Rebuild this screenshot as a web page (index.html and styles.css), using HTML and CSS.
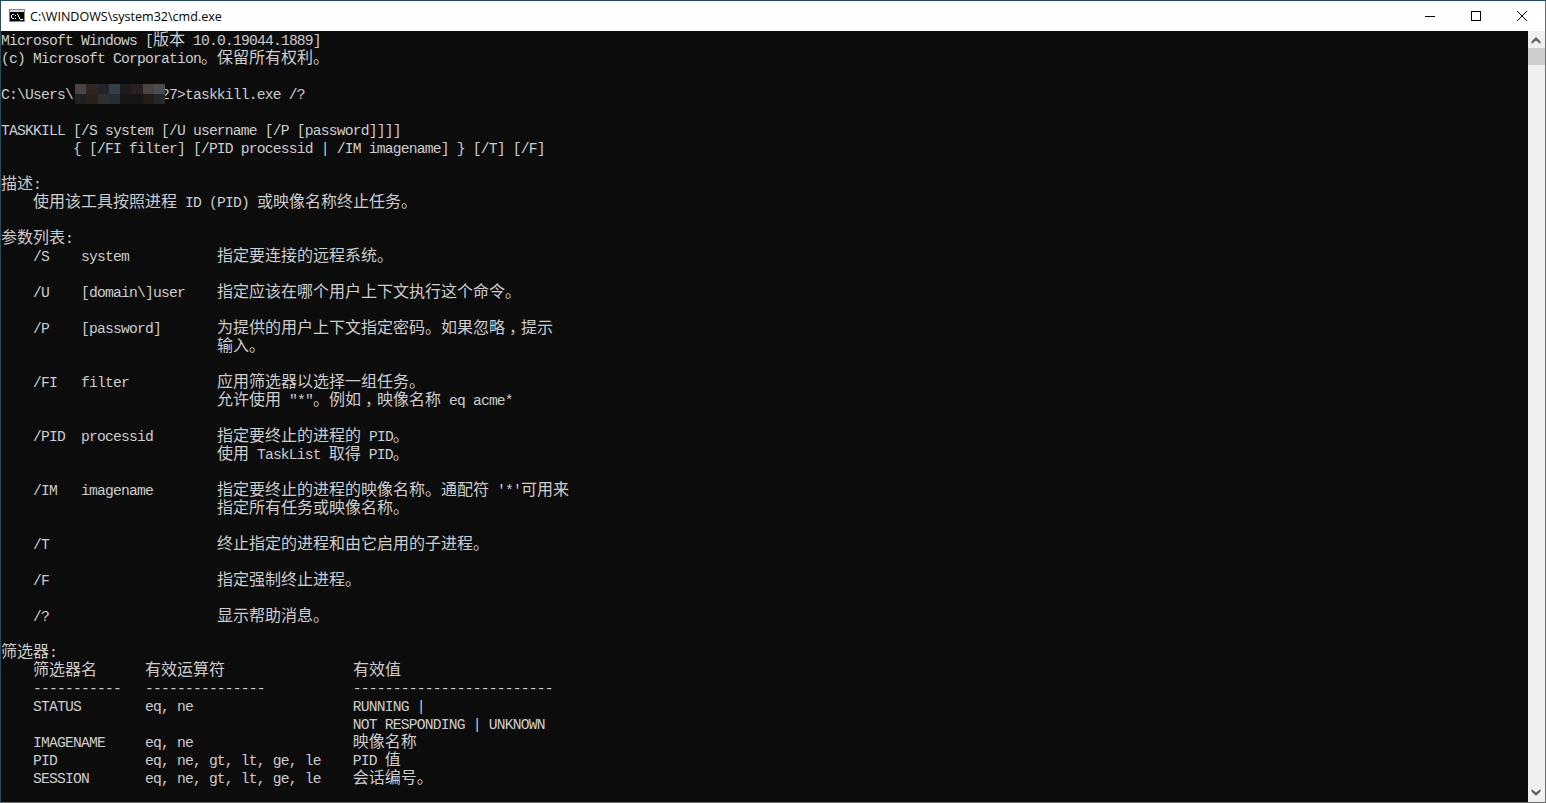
FILE: index.html
```html
<!DOCTYPE html>
<html lang="zh-CN">
<head>
<meta charset="utf-8">
<title>C:\WINDOWS\system32\cmd.exe</title>
<link rel="stylesheet" href="styles.css">
</head>
<body>
<div class="window">
  <header class="titlebar">
    <svg class="app-icon" width="16" height="16" viewBox="0 0 16 16" aria-hidden="true">
      <rect x="0" y="1" width="16" height="13" fill="#8a8a8a"/>
      <rect x="1" y="2" width="14" height="2" fill="#d8d8d8"/>
      <rect x="1" y="4" width="14" height="9" fill="#000"/>
      <path d="M3 6h2v1H3zM2 7h1v3H2zM3 10h2v1H3zM6 7h1v1H6zM6 10h1v1H6zM8 6h1v1H8zM9 7h1v2H9zM10 9h1v2H10zM11 11h3v1h-3z" fill="#fff"/>
    </svg>
    <span class="title">C:\WINDOWS\system32\cmd.exe</span>
    <div class="controls">
      <span class="control"><svg width="10" height="10" viewBox="0 0 10 10"><path d="M0 5.5h10" stroke="#000" fill="none"/></svg></span>
      <span class="control"><svg width="10" height="10" viewBox="0 0 10 10"><rect x=".5" y=".5" width="9" height="9" stroke="#000" fill="none"/></svg></span>
      <span class="control"><svg width="10" height="10" viewBox="0 0 10 10"><path d="M0 0l10 10M10 0L0 10" stroke="#000" stroke-width="1" fill="none"/></svg></span>
    </div>
  </header>
  <div class="body">
    <div class="console">
<span class="line">Microsoft Windows [<i>版本</i> 10.0.19044.1889]</span>
<span class="line">(c) Microsoft Corporation<i>。保留所有权利。</i></span>
<span class="line"> </span>
<span class="line">C:\Users\           27>taskkill.exe /?<span class="mosaic"><b class="m1"></b><b class="m2"></b><b class="m3"></b><b class="m4"></b><b class="m5"></b><b class="m6"></b><b class="m7"></b><b class="m8"></b><b class="m9"></b><b class="m10"></b><b class="m11"></b><b class="m12"></b><b class="m13"></b><b class="m14"></b><b class="m15"></b><b class="m16"></b></span></span>
<span class="line"> </span>
<span class="line">TASKKILL [/S system [/U username [/P [password]]]]</span>
<span class="line">         { [/FI filter] [/PID processid | /IM imagename] } [/T] [/F]</span>
<span class="line"> </span>
<span class="line"><i>描述</i>:</span>
<span class="line">    <i>使用该工具按照进程</i> ID (PID) <i>或映像名称终止任务。</i></span>
<span class="line"> </span>
<span class="line"><i>参数列表</i>:</span>
<span class="line">    /S    system           <i>指定要连接的远程系统。</i></span>
<span class="line"> </span>
<span class="line">    /U    [domain\]user    <i>指定应该在哪个用户上下文执行这个命令。</i></span>
<span class="line"> </span>
<span class="line">    /P    [password]       <i>为提供的用户上下文指定密码。如果忽略<u>，</u>提示</i></span>
<span class="line">                           <i>输入。</i></span>
<span class="line"> </span>
<span class="line">    /FI   filter           <i>应用筛选器以选择一组任务。</i></span>
<span class="line">                           <i>允许使用</i> "*"<i>。例如<u>，</u>映像名称</i> eq acme*</span>
<span class="line"> </span>
<span class="line">    /PID  processid        <i>指定要终止的进程的</i> PID<i>。</i></span>
<span class="line">                           <i>使用</i> TaskList <i>取得</i> PID<i>。</i></span>
<span class="line"> </span>
<span class="line">    /IM   imagename        <i>指定要终止的进程的映像名称。通配符</i> '*'<i>可用来</i></span>
<span class="line">                           <i>指定所有任务或映像名称。</i></span>
<span class="line"> </span>
<span class="line">    /T                     <i>终止指定的进程和由它启用的子进程。</i></span>
<span class="line"> </span>
<span class="line">    /F                     <i>指定强制终止进程。</i></span>
<span class="line"> </span>
<span class="line">    /?                     <i>显示帮助消息。</i></span>
<span class="line"> </span>
<span class="line"><i>筛选器</i>:</span>
<span class="line">    <i>筛选器名</i>      <i>有效运算符</i>                <i>有效值</i></span>
<span class="line">    -----------   ---------------           -------------------------</span>
<span class="line">    STATUS        eq, ne                    RUNNING |</span>
<span class="line">                                            NOT RESPONDING | UNKNOWN</span>
<span class="line">    IMAGENAME     eq, ne                    <i>映像名称</i></span>
<span class="line">    PID           eq, ne, gt, lt, ge, le    PID <i>值</i></span>
<span class="line">    SESSION       eq, ne, gt, lt, ge, le    <i>会话编号。</i></span>
    </div>
    <div class="scrollbar">
      <svg class="arrow" width="17" height="17" viewBox="0 0 17 17"><path d="M3.5 10.5l4-4h1l4 4v2.5L8 9.5 3.5 13z" fill="#606060"/></svg>
      <div class="thumb"></div>
      <div class="track"></div>
      <svg class="arrow" width="17" height="17" viewBox="0 0 17 17"><path d="M3.5 4l4.5 3.5L12.5 4v2.5l-4 4h-1l-4-4z" fill="#606060"/></svg>
    </div>
  </div>
</div>
</body>
</html>
```
FILE: styles.css
```css
* { box-sizing: border-box; }
html, body { margin: 0; height: 100%; overflow: hidden; background: #fff; }
.window {
  width: 1546px;
  height: 803px;
  display: flex;
  flex-direction: column;
  border: 1px solid #6f6f6f;
  border-top-color: #1c4a68;
  border-left-color: #2a4a5a;
}
.titlebar {
  height: 30px;
  flex: none;
  display: flex;
  align-items: center;
  background: #fff;
  padding-left: 8px;
}
.app-icon { flex: none; margin-right: 5px; }
.title {
  font: 12.55px "Open Sans", "Liberation Sans", sans-serif;
  color: #000;
}
.controls { margin-left: auto; display: flex; }
.control {
  width: 46px;
  height: 29px;
  display: flex;
  align-items: center;
  justify-content: center;
}
.body { flex: 1; min-height: 0; display: flex; }
.console {
  flex: 1;
  background: #0c0c0c;
  color: #cccccc;
  font-family: "Liberation Mono", monospace;
  font-size: 14.67px;
  letter-spacing: -0.8px;
  line-height: 18px;
  overflow: hidden;
  padding-top: 1px;
}
.line { display: block; height: 18px; position: relative; white-space: pre; }
.line i {
  font-style: normal;
  font-family: "Noto Sans CJK SC", sans-serif;
  font-size: 16px;
  letter-spacing: 0;
  line-height: 0;
}
.line u {
  text-decoration: none;
  display: inline-block;
  width: 16px;
  text-indent: 4px;
}
.mosaic {
  position: absolute;
  left: 74px;
  top: -2px;
  width: 90px;
  height: 20px;
  display: grid;
  grid-template-columns: repeat(8, 1fr);
  grid-template-rows: repeat(2, 1fr);
}
.m1 { background: #474443; } .m2 { background: #2e2621; } .m3 { background: #24242e; } .m4 { background: #334049; }
.m5 { background: #1c1c1b; } .m6 { background: #2a1f1e; } .m7 { background: #4a4440; } .m8 { background: #4a4d50; }
.m9 { background: #1f2122; } .m10 { background: #2a2119; } .m11 { background: #2d302c; } .m12 { background: #252e34; }
.m13 { background: #161616; } .m14 { background: #181615; } .m15 { background: #241c17; } .m16 { background: #25292c; }
.scrollbar {
  width: 17px;
  flex: none;
  display: flex;
  flex-direction: column;
  background: #f0f0f0;
}
.arrow { flex: none; display: block; }
.thumb { height: 17px; background: #cdcdcd; flex: none; }
.track { flex: 1; }
```
